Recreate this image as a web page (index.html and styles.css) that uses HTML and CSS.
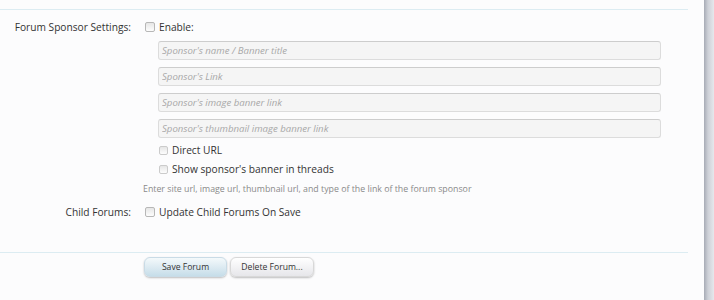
FILE: index.html
```html
<!DOCTYPE html>
<html lang="en">
<head>
    <meta charset="UTF-8">
    <title>Forum Options</title>
    <link rel="stylesheet" href="styles.css">
</head>
<body>
    <div class="page">
        <div class="main">
            <div class="rule"></div>

            <div class="row row-sponsor">
                <div class="label">Forum Sponsor Settings:</div>
                <div class="field">
                    <label class="check"><input type="checkbox"> Enable:</label>
                    <div class="sub">
                        <input class="text" type="text" placeholder="Sponsor's name / Banner title">
                        <input class="text" type="text" placeholder="Sponsor's Link">
                        <input class="text" type="text" placeholder="Sponsor's image banner link">
                        <input class="text" type="text" placeholder="Sponsor's thumbnail image banner link">
                        <label class="check check-sub"><input type="checkbox"> Direct URL</label>
                        <label class="check check-sub"><input type="checkbox"> Show sponsor's banner in threads</label>
                    </div>
                    <p class="explain">Enter site url, image url, thumbnail url, and type of the link of the forum sponsor</p>
                </div>
            </div>

            <div class="row row-child">
                <div class="label">Child Forums:</div>
                <div class="field">
                    <label class="check"><input type="checkbox"> Update Child Forums On Save</label>
                </div>
            </div>

            <div class="rule rule-bottom"></div>

            <div class="buttons">
                <button class="btn btn-primary">Save Forum</button>
                <button class="btn">Delete Forum...</button>
            </div>
        </div>
        <div class="edge"></div>
    </div>
</body>
</html>
```

FILE: styles.css
```css
body {
    margin: 0;
    background-color: #fcfcfd;
    font-family: "Open Sans", "Liberation Sans", sans-serif;
    font-size: 10.2px;
    color: #333;
}

.page {
    display: flex;
    height: 300px;
    overflow: hidden;
}

.main {
    width: 704px;
    padding-top: 9px;
}

.edge {
    width: 10px;
    background: linear-gradient(to right, #a7abb5, #cdd0d7 40%, #e6e8ec);
}

.rule {
    width: 688px;
    border-top: 1px solid #dcecf2;
}

.rule-bottom {
    margin-top: 32px;
}

.row {
    display: flex;
    margin-top: 9px;
}

.row-child {
    margin-top: 8px;
}

.label {
    width: 131px;
    padding-right: 13px;
    text-align: right;
    line-height: 16px;
    color: #333;
}

.field {
    flex: none;
}

.check {
    display: flex;
    align-items: center;
    line-height: 16px;
    color: #333;
}

.check input {
    appearance: none;
    width: 10px;
    height: 10px;
    margin: 0 4px 0 1px;
    border: 1px solid #b7b7b7;
    border-radius: 2px;
    background: linear-gradient(#e6e6e6, #fdfdfd);
}

.sub {
    padding-left: 14px;
}

.text {
    display: block;
    box-sizing: border-box;
    width: 503px;
    height: 19px;
    margin: 7px 0 0 0;
    padding: 0 3px;
    border: 1px solid #dcdcdc;
    border-top-color: #cdcdcd;
    border-radius: 3px;
    background-color: #f5f5f5;
    font-family: inherit;
    font-size: 9.6px;
}

.text:first-child {
    margin-top: 6px;
}

.text::placeholder {
    color: #a8a8a8;
    font-style: italic;
}

.check-sub {
    line-height: 19px;
}

.check-sub:first-of-type {
    margin-top: 3px;
}

.check-sub input {
    width: 9px;
    height: 9px;
    border-color: #cbcbcb;
    margin-right: 4px;
}

.explain {
    margin: 3px 0 0 -1px;
    font-size: 8.8px;
    line-height: 14px;
    color: #8a8a8a;
}

.buttons {
    display: flex;
    gap: 3px;
    margin: 4px 0 0 144px;
}

.btn {
    width: 84px;
    height: 20px;
    padding: 0;
    border: 1px solid #d8d8d8;
    border-radius: 6px;
    background: linear-gradient(#ffffff, #e6e6ea);
    box-shadow: 0 1px 2px rgba(0, 0, 0, 0.25);
    font-family: inherit;
    font-size: 8.6px;
    color: #333;
}

.btn-primary {
    width: 83px;
    border-color: #c9dbe6;
    background: linear-gradient(#f4f9fb, #c6dde9);
}
```
